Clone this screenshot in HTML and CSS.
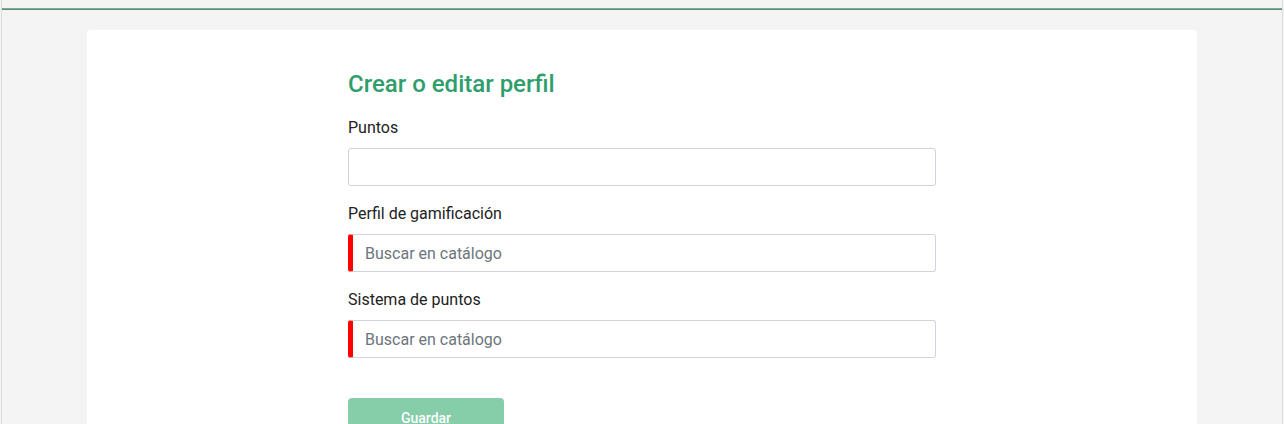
FILE: index.html
```html
<!DOCTYPE html>
<html lang="es">
<head>
<meta charset="utf-8">
<title>Crear o editar perfil</title>
<link rel="stylesheet" href="styles.css">
</head>
<body>
<div class="frame">
  <div class="topbar"></div>
  <main class="main">
    <section class="card">
      <form class="form">
        <h1 class="title">Crear o editar perfil</h1>
        <div class="field">
          <label class="label">Puntos</label>
          <input class="input" type="text">
        </div>
        <div class="field">
          <label class="label">Perfil de gamificación</label>
          <input class="input input-required" type="text" placeholder="Buscar en catálogo">
        </div>
        <div class="field">
          <label class="label">Sistema de puntos</label>
          <input class="input input-required" type="text" placeholder="Buscar en catálogo">
        </div>
        <div class="actions">
          <button class="btn" type="button">Guardar</button>
        </div>
      </form>
    </section>
  </main>
</div>
</body>
</html>
```
FILE: styles.css
```css
* { box-sizing: border-box; }
html, body {
  margin: 0;
  padding: 0;
  height: 100%;
}
body {
  background: #f4f4f4;
  font-family: Roboto, "Liberation Sans", Arial, sans-serif;
  color: #212529;
  overflow: hidden;
}
.frame {
  margin: 0 1px;
  min-height: 100%;
  border-left: 1px solid #dcdcdc;
  border-right: 1px solid #dcdcdc;
  padding-top: 8px;
}
.topbar {
  height: 2px;
  border-top: 1px solid #9a9a9a;
  border-bottom: 1px solid #3d9e72;
}
.main {
  padding: 20px 85px 0 85px;
}
.card {
  background: #ffffff;
  border-radius: 3px 3px 0 0;
  padding: 40px 0 60px 0;
  min-height: 500px;
}
.form {
  width: 588px;
  margin-left: 261px;
  display: flex;
  flex-direction: column;
}
.title {
  margin: 0 0 19px 0;
  font-size: 24px;
  line-height: 28px;
  font-weight: 500;
  color: #2f9e6c;
}
.field {
  display: flex;
  flex-direction: column;
  margin-bottom: 17px;
}
.label {
  font-size: 16px;
  line-height: 22px;
  margin-bottom: 9px;
  color: #222;
}
.input {
  height: 38px;
  width: 100%;
  border: 1px solid #ced4da;
  border-radius: 3px;
  padding: 0 16px;
  font-family: Roboto, "Liberation Sans", Arial, sans-serif;
  font-size: 16px;
  color: #495057;
  background: #fff;
  outline: none;
}
.input::placeholder {
  color: #6c757d;
}
.input-required {
  border-left: 5px solid #ff0000;
  padding-left: 12px;
}
.actions {
  margin-top: 23px;
}
.btn {
  width: 156px;
  height: 38px;
  border: none;
  border-radius: 4px;
  background: #86cdaa;
  color: #ffffff;
  font-family: Roboto, "Liberation Sans", Arial, sans-serif;
  font-size: 14px;
  font-weight: 500;
  padding: 0;
  padding-top: 1px;
}
```
